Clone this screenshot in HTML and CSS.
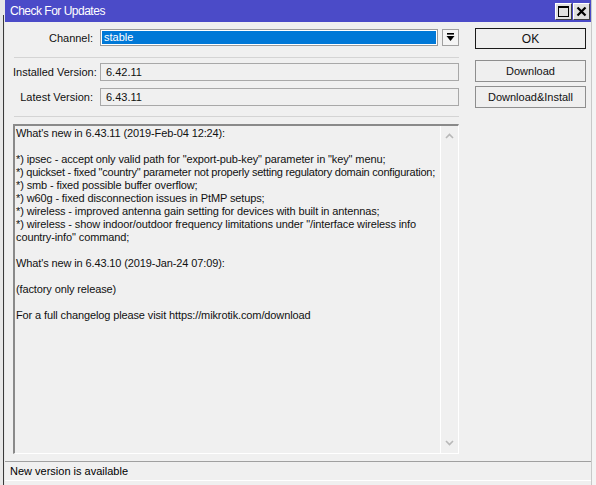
FILE: index.html
```html
<!DOCTYPE html>
<html>
<head>
<meta charset="utf-8">
<title>Check For Updates</title>
<link rel="stylesheet" href="styles.css">
</head>
<body>
<div class="desk">
  <div class="leftstrip"><div class="leftline"></div></div>
  <div class="window">
    <div class="titlebar">
      <span class="title">Check For Updates</span>
      <div class="tbtns">
        <div class="tbtn"><svg width="11" height="11" viewBox="0 0 11 11"><rect x="0.5" y="0.5" width="10" height="10" fill="none" stroke="#000"/><rect x="0" y="0" width="11" height="2" fill="#000"/></svg></div>
        <div class="tbtn"><svg width="11" height="11" viewBox="0 0 11 11"><path d="M1.5 1.5 L9.5 9.5 M9.5 1.5 L1.5 9.5" stroke="#000" stroke-width="2.2"/></svg></div>
      </div>
    </div>
    <div class="content">
      <div class="main">
        <div class="row row-channel">
          <span class="label">Channel:</span>
          <div class="select"><span class="selval">stable</span></div>
          <div class="ddbtn"><svg width="9" height="9" viewBox="0 0 9 9"><rect x="1" y="0" width="7" height="1.6" fill="#000"/><path d="M0.5 3 L8.5 3 L4.5 8 Z" fill="#000"/></svg></div>
        </div>
        <div class="sep sep1"></div>
        <div class="row row-inst">
          <span class="label">Installed Version:</span>
          <div class="field">6.42.11</div>
        </div>
        <div class="row row-latest">
          <span class="label">Latest Version:</span>
          <div class="field">6.43.11</div>
        </div>
        <div class="sep sep2"></div>
        <div class="textarea">
          <div class="text">What's new in 6.43.11 (2019-Feb-04 12:24):<br><br>*) ipsec - accept only valid path for "export-pub-key" parameter in "key" menu;<br><span class="tight">*) quickset - fixed "country" parameter not properly setting regulatory domain configuration;</span><br>*) smb - fixed possible buffer overflow;<br>*) w60g - fixed disconnection issues in PtMP setups;<br>*) wireless - improved antenna gain setting for devices with built in antennas;<br>*) wireless - show indoor/outdoor frequency limitations under "/interface wireless info<br>country-info" command;<br><br>What's new in 6.43.10 (2019-Jan-24 07:09):<br><br>(factory only release)<br><br>For a full changelog please visit https://mikrotik.com/download</div>
          <div class="scroll">
            <svg class="up" width="9" height="6" viewBox="0 0 9 6"><path d="M1 5 L4.5 1.5 L8 5" fill="none" stroke="#b8b8b8" stroke-width="1.6"/></svg>
            <svg class="down" width="9" height="6" viewBox="0 0 9 6"><path d="M1 1 L4.5 4.5 L8 1" fill="none" stroke="#b8b8b8" stroke-width="1.6"/></svg>
          </div>
        </div>
      </div>
      <div class="side">
        <div class="btn btn-ok">OK</div>
        <div class="btn btn-dl">Download</div>
        <div class="btn btn-di">Download&amp;Install</div>
      </div>
    </div>
    <div class="status"><span>New version is available</span></div>
  </div>
  <div class="rightstrip"></div>
</div>
</body>
</html>
```
FILE: styles.css
```css
html, body {
  margin: 0;
  padding: 0;
  width: 596px;
  height: 485px;
  overflow: hidden;
  background: #f0f0f0;
  font-family: "Liberation Sans", Arial, sans-serif;
  font-size: 11px;
  color: #000;
}
.desk {
  display: flex;
  width: 596px;
  height: 485px;
}
.leftstrip {
  width: 5px;
  background: #e8e8e8;
  position: relative;
}
.leftline {
  position: absolute;
  left: 3px;
  top: 15px;
  bottom: 0;
  width: 1px;
  background: #3a3a3a;
}
.rightstrip {
  width: 4px;
  background: #f4f4f4;
  border-left: 1px solid #c8c8c8;
}
.window {
  flex: 1;
  display: flex;
  flex-direction: column;
  background: #f0f0f0;
}
.titlebar {
  height: 22px;
  background: #4b4bc8;
  display: flex;
  align-items: center;
  justify-content: space-between;
  padding-left: 5px;
  padding-right: 1px;
}
.title {
  color: #fff;
  font-size: 12px;
  letter-spacing: -0.5px;
}
.tbtns {
  display: flex;
  gap: 1px;
}
.tbtn {
  background: #e0e0e0;
  border: 1px solid #fff;
  border-right-color: #404040;
  border-bottom-color: #404040;
  display: flex;
  align-items: center;
  justify-content: center;
  box-sizing: border-box;
  width: 17px;
  height: 17px;
}
.content {
  display: flex;
  flex: 1;
}
.main {
  margin-left: 8px;
  width: 446px;
  display: flex;
  flex-direction: column;
}
.row {
  display: flex;
  align-items: center;
}
.label {
  width: 80px;
  text-align: right;
  margin-right: 7px;
  white-space: nowrap;
  color: #111;
}
.row-channel {
  margin-top: 7px;
  height: 17px;
}
.select {
  width: 338px;
  height: 17px;
  box-sizing: border-box;
  border: 1px solid #9a9a9a;
  padding: 1px;
  background: #fff;
}
.selval {
  display: block;
  height: 100%;
  background: #0078d7;
  color: #fff;
  line-height: 13px;
  padding-left: 2px;
}
.ddbtn {
  width: 17px;
  height: 17px;
  margin-left: 4px;
  box-sizing: border-box;
  border: 1px solid #a0a0a0;
  background: #f4f4f4;
  display: flex;
  align-items: center;
  justify-content: center;
}
.sep {
  height: 1px;
  background: #d4d4d4;
  margin-left: 1px;
}
.sep1 { margin-top: 11px; }
.sep2 { margin-top: 10px; }
.row-inst { margin-top: 5px; }
.row-latest { margin-top: 7px; }
.field {
  width: 359px;
  height: 18px;
  box-sizing: border-box;
  border: 1px solid #a8a8a8;
  padding-left: 5px;
  line-height: 16px;
  color: #111;
}
.textarea {
  margin-top: 7px;
  height: 330px;
  box-sizing: border-box;
  border: 2px solid #8a8a8a;
  border-right: 1px solid #fff;
  border-bottom: 1px solid #fff;
  display: flex;
}
.text {
  flex: 1;
  padding: 1px 0 0 1px;
  line-height: 13px;
  color: #111;
  white-space: nowrap;
  overflow: hidden;
  letter-spacing: -0.12px;
}
.tight {
  letter-spacing: -0.24px;
}
.scroll {
  width: 17px;
  border-left: 1px solid #fff;
  position: relative;
}
.scroll .up {
  position: absolute;
  left: 4px;
  top: 7px;
}
.scroll .down {
  position: absolute;
  left: 4px;
  bottom: 7px;
}
.side {
  margin-left: 16px;
  width: 111px;
  display: flex;
  flex-direction: column;
}
.btn {
  box-sizing: border-box;
  height: 22px;
  border: 1px solid #8e8e8e;
  background: #efefef;
  display: flex;
  align-items: center;
  justify-content: center;
  color: #111;
}
.btn-ok {
  margin-top: 6px;
  height: 21px;
  border-color: #1a1a1a;
  font-size: 12px;
}
.btn-dl { margin-top: 11px; }
.btn-di { margin-top: 4px; }
.status {
  height: 18px;
  margin-bottom: 4px;
  border-top: 1px solid #a0a0a0;
  border-bottom: 1px solid #fff;
  display: flex;
  align-items: center;
  padding-left: 5px;
}
```
